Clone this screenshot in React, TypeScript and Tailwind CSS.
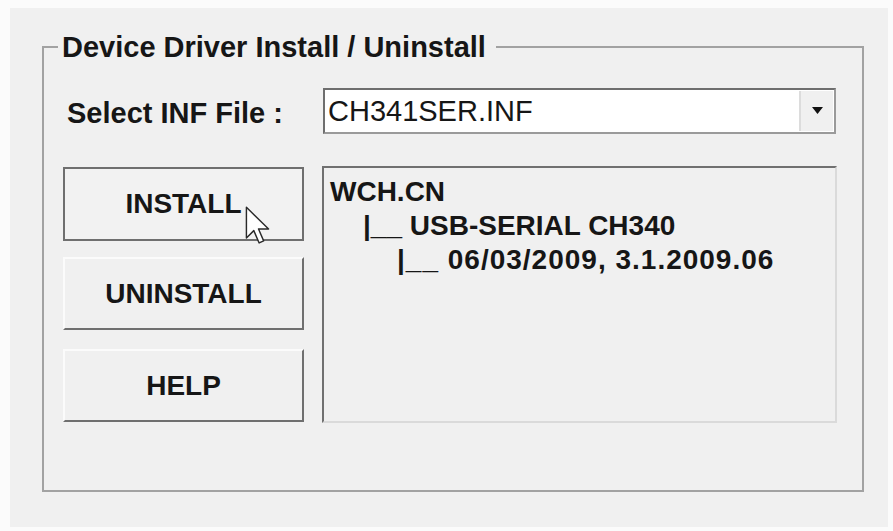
import React from "react";

const font = { fontFamily: '"Liberation Sans", Arial, sans-serif' };

function Cursor() {
  return (
    <svg
      className="absolute left-[180px] top-[37px] pointer-events-none"
      width="25"
      height="39"
      viewBox="0 0 12 19"
    >
      <path
        d="M0.6 0.6 L0.6 15.6 L4.2 12 L6.8 18 L9 17 L6.5 11.2 L11.4 11.2 Z"
        fill="#ffffff"
        stroke="#2a2a2a"
        strokeWidth="0.7"
        strokeLinejoin="round"
      />
    </svg>
  );
}

export default function App() {
  return (
    <div
      className="w-[893px] h-[531px] bg-[#fbfbfb] pt-[8px] pl-[10px] text-[#161616]"
      style={font}
    >
      <div className="w-[878px] h-[519px] bg-[#f0f0f0] pt-[22px] pl-[32px]">
        <fieldset className="w-[822px] h-[462px] border-2 border-[#a2a2a2] m-0 p-0">
          <legend className="ml-[14px] pl-[4px] pr-[10px] text-[29px] leading-[34px] font-bold">
            Device Driver Install / Uninstall
          </legend>
          <div className="pl-[19px] pt-[24px] flex flex-col">
            <div className="flex items-center">
              <div className="w-[260px] pl-[4px] pt-[4px] text-[29px] leading-[34px] font-bold">
                Select INF File :
              </div>
              <div className="w-[513px] h-[46px] flex border-2 border-t-[#6e6e6e] border-l-[#6e6e6e] border-r-[#9a9a9a] border-b-[#9a9a9a] bg-white">
                <div className="flex-1 flex items-center pl-[3px] text-[29px] leading-[34px] font-normal">
                  CH341SER.INF
                </div>
                <div className="w-[34px] mt-[1px] mb-[1px] mr-[1px] flex items-center justify-center bg-[#f0f0f0] border-l-2 border-[#dcdcdc]">
                  <svg width="11" height="8" viewBox="0 0 11 8">
                    <path d="M0 0 L11 0 L5.5 7 Z" fill="#111111" />
                  </svg>
                </div>
              </div>
            </div>
            <div className="flex items-start mt-[32px]">
              <div className="w-[241px] mt-[1px] flex flex-col">
                <div className="relative h-[74px] flex items-center justify-center border-2 border-[#6f6f6f] bg-[#f2f2f2] text-[28px] font-bold">
                  INSTALL
                  <Cursor />
                </div>
                <div className="mt-[16px] h-[73px] flex items-center justify-center border-2 border-t-[#fbfbfb] border-l-[#fbfbfb] border-r-[#6f6f6f] border-b-[#6f6f6f] bg-[#f0f0f0] text-[28px] font-bold">
                  UNINSTALL
                </div>
                <div className="mt-[19px] h-[73px] flex items-center justify-center border-2 border-t-[#fbfbfb] border-l-[#fbfbfb] border-r-[#6f6f6f] border-b-[#6f6f6f] bg-[#f0f0f0] text-[28px] font-bold">
                  HELP
                </div>
              </div>
              <div className="ml-[18px] w-[515px] h-[257px] border-2 border-t-[#707070] border-l-[#707070] border-r-[#dadada] border-b-[#dadada] bg-[#f0f0f0] pl-[6px] pt-[7px] text-[28px] leading-[34px] font-bold">
                <div>WCH.CN</div>
                <div className="pl-[33px] whitespace-pre">|__ USB-SERIAL CH340</div>
                <div className="pl-[67px] whitespace-pre tracking-[1px]">|__ 06/03/2009, 3.1.2009.06</div>
              </div>
            </div>
          </div>
        </fieldset>
      </div>
    </div>
  );
}
